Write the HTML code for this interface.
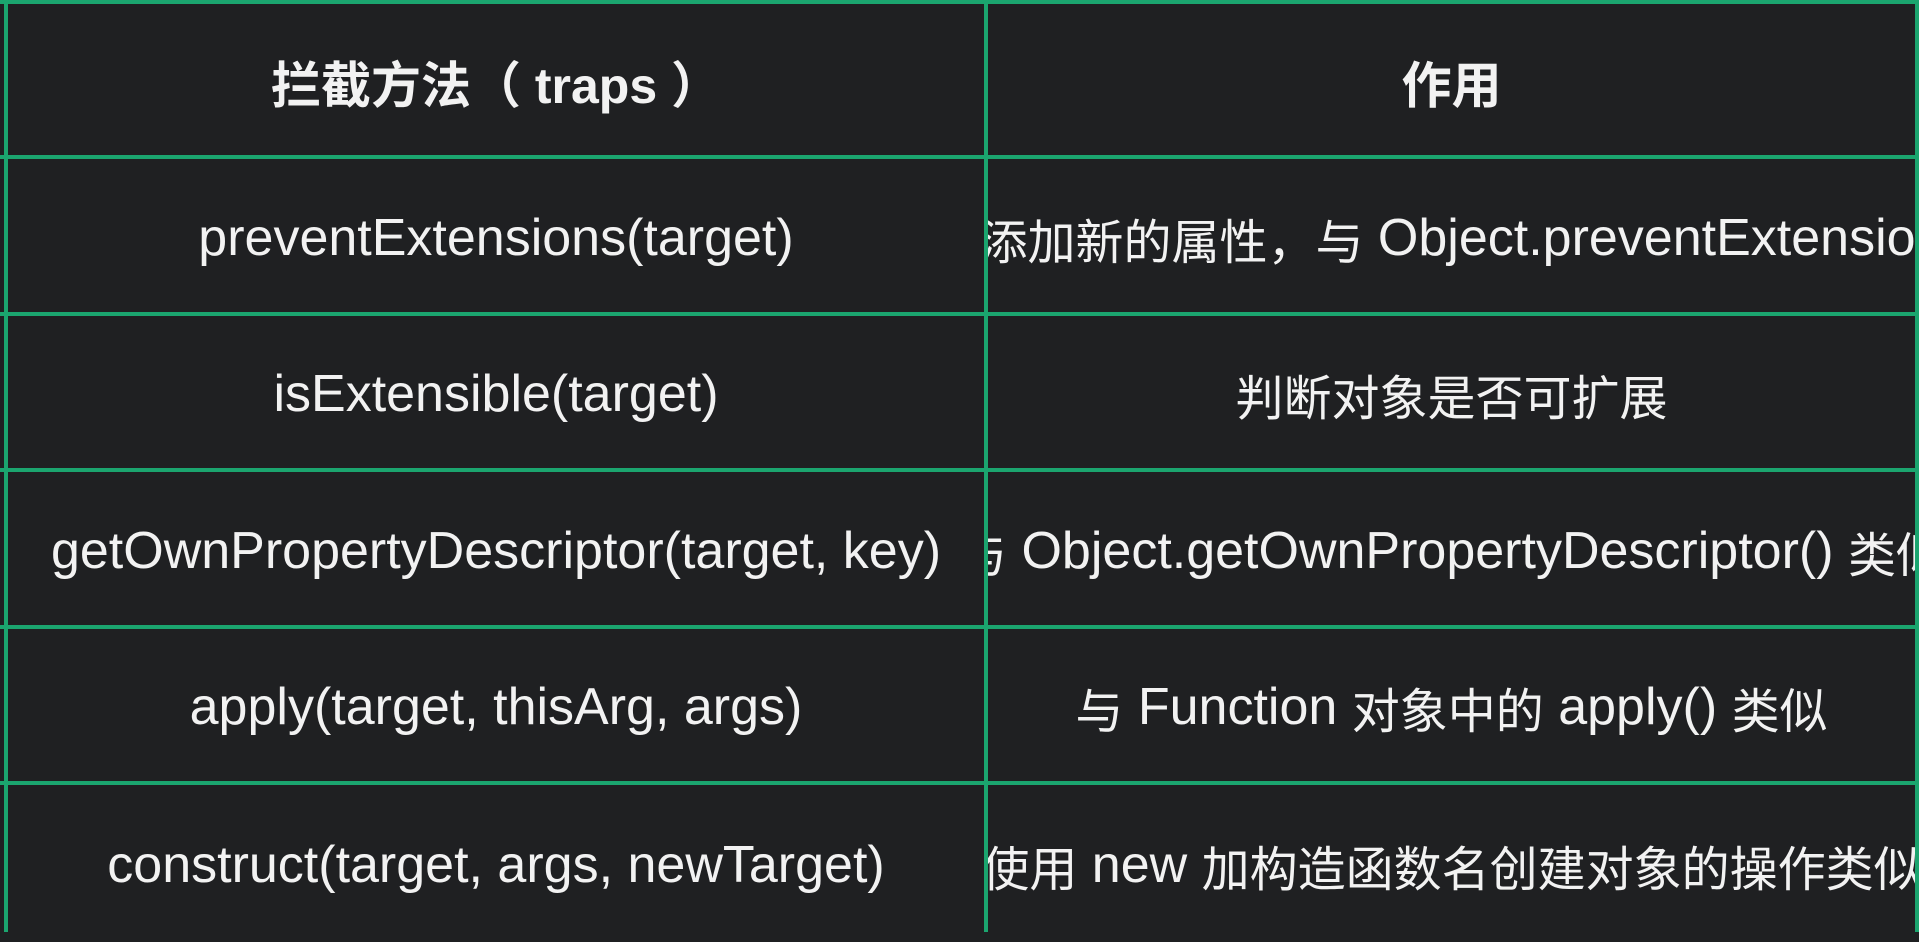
<!DOCTYPE html>
<html><head><meta charset="utf-8"><style>
html,body{margin:0;padding:0;background:#1f2022;width:1919px;height:932px;overflow:hidden}
.t{position:absolute;left:0;top:0;width:1919px;height:932px;background:#1f2022}
.h{position:absolute;left:0;width:1919px;height:4px;background:#1ba56f}
.v{position:absolute;top:0;width:4px;height:932px;background:#1ba56f}
.c{position:absolute;display:flex;align-items:center;justify-content:center;white-space:nowrap;overflow:hidden;color:#f2f2f2;font-family:"Liberation Sans","Noto Sans CJK SC",sans-serif;font-size:52px}
.b{font-weight:bold;font-size:50px}
.z{font-size:48px}
</style></head><body><div class="t">
<div class="h" style="top:0"></div>
<div class="h" style="top:155px"></div>
<div class="h" style="top:312px"></div>
<div class="h" style="top:468px"></div>
<div class="h" style="top:625px"></div>
<div class="h" style="top:781px"></div>
<div class="v" style="left:4px"></div>
<div class="v" style="left:984px"></div>
<div class="v" style="left:1915px"></div>

<div class="c b" style="left:8px;width:976px;top:6px;height:151px">拦截方法（ traps ）</div>
<div class="c b" style="left:988px;width:927px;top:6px;height:151px">作用</div>

<div class="c" style="left:8px;width:976px;top:161px;height:153px">preventExtensions(target)</div>
<div class="c" style="left:988px;width:927px;top:161px;height:153px"><span class="z">阻止对象添加新的属性，与</span>&nbsp;Object.preventExtensions()&nbsp;<span class="z">类似</span></div>

<div class="c" style="left:8px;width:976px;top:318px;height:152px">isExtensible(target)</div>
<div class="c" style="left:988px;width:927px;top:318px;height:152px"><span class="z">判断对象是否可扩展</span></div>

<div class="c" style="left:8px;width:976px;top:474px;height:153px">getOwnPropertyDescriptor(target, key)</div>
<div class="c" style="left:988px;width:927px;top:474px;height:153px"><span class="z">与</span>&nbsp;Object.getOwnPropertyDescriptor()&nbsp;<span class="z">类似</span></div>

<div class="c" style="left:8px;width:976px;top:631px;height:152px">apply(target, thisArg, args)</div>
<div class="c" style="left:988px;width:927px;top:631px;height:152px"><span class="z">与</span>&nbsp;Function&nbsp;<span class="z">对象中的</span>&nbsp;apply()&nbsp;<span class="z">类似</span></div>

<div class="c" style="left:8px;width:976px;top:787px;height:155px">construct(target, args, newTarget)</div>
<div class="c" style="left:988px;width:927px;top:787px;height:155px"><span class="z">使用</span>&nbsp;new&nbsp;<span class="z">加构造函数名创建对象的操作类似</span></div>
</div></body></html>
